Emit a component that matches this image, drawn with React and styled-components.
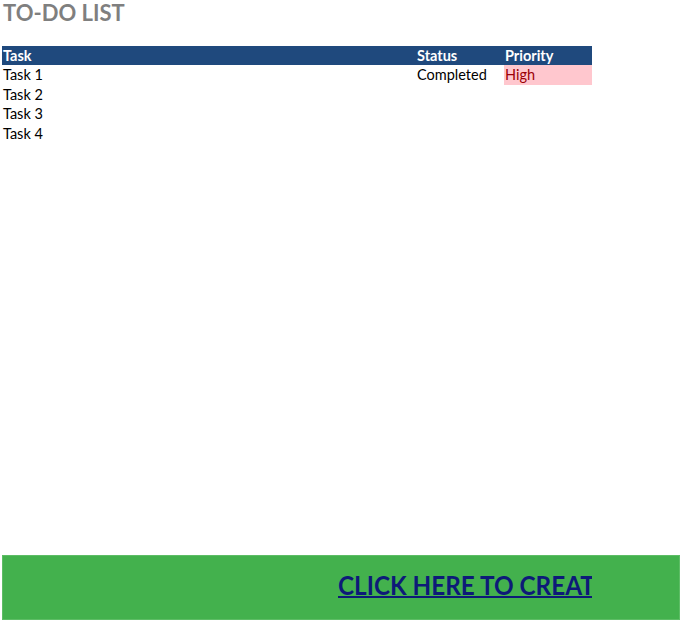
import React from "react";
import styled, { createGlobalStyle } from "styled-components";

const tasks = [
    { name: "Task 1", status: "Completed", priority: "High" },
    { name: "Task 2" },
    { name: "Task 3" },
    { name: "Task 4" },
];

const App = () => {
    return (
        <Sheet>
            <GlobalStyle />
            <Title>TO-DO LIST</Title>
            <Table>
                <HeadCell>Task</HeadCell>
                <HeadCell>Status</HeadCell>
                <HeadCell>Priority</HeadCell>
                {tasks.map((t) => (
                    <React.Fragment key={t.name}>
                        <Cell>{t.name}</Cell>
                        <Cell>{t.status}</Cell>
                        <Cell bad={t.priority === "High"}>{t.priority}</Cell>
                    </React.Fragment>
                ))}
            </Table>
            <Banner>
                <LinkClip>
                    <BannerLink href="#">CLICK HERE TO CREATE IN SMARTSHEET</BannerLink>
                </LinkClip>
            </Banner>
        </Sheet>
    );
};

export default App;

const GlobalStyle = createGlobalStyle`
    body{
        margin: 0;
        background: #fff;
        font-family: Lato, "Liberation Sans", sans-serif;
    }
`

const Sheet = styled.div`
    height: 100vh;
    box-sizing: border-box;
    display: flex;
    flex-direction: column;
    padding-left: 2px;
`

const Title = styled.div`
    height: 26px;
    margin-bottom: 19.5px;
    padding-left: 1px;
    font-size: 22px;
    font-weight: bold;
    line-height: 26px;
    color: #7f7f7f;
`

const Table = styled.div`
    display: grid;
    grid-template-columns: 414px 88px 88px;
    grid-auto-rows: 19.5px;
    font-size: 14.5px;
    line-height: 19.5px;
`

const HeadCell = styled.div`
    background: #1f497d;
    color: #fff;
    font-weight: bold;
    padding-left: 1px;
`

const Cell = styled.div`
    color: ${(p) => (p.bad ? "#9c0006" : "#000")};
    background: ${(p) => (p.bad ? "#ffc7ce" : "transparent")};
    padding-left: 1px;
`

const Banner = styled.div`
    margin-top: auto;
    width: 678px;
    height: 65px;
    box-sizing: border-box;
    background: #43b14d;
    border: 1px solid #5dbd65;
    display: flex;
    align-items: center;
    padding-left: 335px;
`

const LinkClip = styled.div`
    width: 254px;
    height: 36px;
    overflow: hidden;
    white-space: nowrap;
    margin-top: -6px;
`

const BannerLink = styled.a`
    display: inline-block;
    transform: scaleX(0.9);
    transform-origin: left center;
    font-size: 27px;
    line-height: 36px;
    font-weight: bold;
    color: #0d1a78;
    text-decoration: underline;
    text-decoration-thickness: 2px;
`
